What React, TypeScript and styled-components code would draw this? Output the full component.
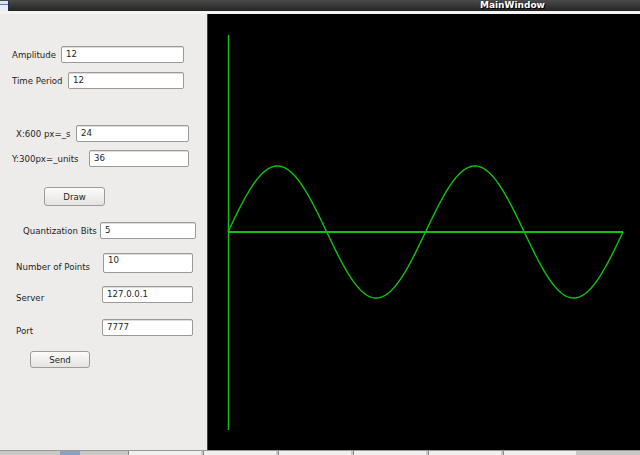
import React from 'react';
import styled, { createGlobalStyle } from 'styled-components';

const Global = createGlobalStyle`
	html, body { margin: 0; padding: 0; background: #edecea; }
	body { font-family: "DejaVu Sans", "Liberation Sans", sans-serif; }
`;

type Field = {
	label: string;
	value: string;
	top: number;
	left: number;
	labelWidth: number;
	width: number;
	height?: number;
	labelDrop?: number;
	valueTop?: boolean;
};

const topFields: Field[] = [
	{ label: 'Amplitude', value: '12', top: 32, left: 12, labelWidth: 49, width: 123 },
	{ label: 'Time Period', value: '12', top: 9, left: 12, labelWidth: 56, width: 116 },
];

const scaleFields: Field[] = [
	{ label: 'X:600 px=_s', value: '24', top: 36, left: 16, labelWidth: 60, width: 113 },
	{ label: 'Y:300px=_units', value: '36', top: 8, left: 12, labelWidth: 77, width: 100 },
];

const netFields: Field[] = [
	{ label: 'Quantization Bits', value: '5', top: 16, left: 23, labelWidth: 77, width: 96 },
	{ label: 'Number of Points', value: '10', top: 14, left: 16, labelWidth: 87, width: 90, height: 20, labelDrop: 8, valueTop: true },
	{ label: 'Server', value: '127.0.0.1', top: 13, left: 16, labelWidth: 86, width: 91, labelDrop: 6 },
	{ label: 'Port', value: '7777', top: 16, left: 16, labelWidth: 86, width: 91, labelDrop: 6 },
];

function wavePath(): string {
	const pts: string[] = [];
	for (let x = 20; x <= 415; x += 1) {
		const y = 218 - 66 * Math.sin((2 * Math.PI * (x - 20)) / 197.5);
		pts.push(`${x},${y.toFixed(2)}`);
	}
	return 'M' + pts.join(' L');
}

function Row({ f }: { f: Field }) {
	return (
		<FieldRow $top={f.top} $left={f.left}>
			<Label $w={f.labelWidth} $drop={f.labelDrop || 0}>{f.label}</Label>
			<Input $w={f.width} $h={f.height || 17} $valueTop={!!f.valueTop}>{f.value}</Input>
		</FieldRow>
	);
}

export default function App(): React.ReactElement {
	return (
		<Screen>
			<Global />
			<TitleBar>
				<WinIcon />
				<Title>MainWindow</Title>
			</TitleBar>
			<Body>
				<Panel>
					{topFields.map((f) => <Row key={f.label} f={f} />)}
					{scaleFields.map((f) => <Row key={f.label} f={f} />)}
					<Button $top={20} $left={44} $w={61} $h={19}>Draw</Button>
					{netFields.map((f) => <Row key={f.label} f={f} />)}
					<Button $top={15} $left={30} $w={60} $h={17}>Send</Button>
				</Panel>
				<Canvas>
					<svg width="433" height="437" viewBox="0 0 433 437">
						<line x1="20.5" y1="21" x2="20.5" y2="416" stroke="#10c010" strokeWidth="1.5" />
						<line x1="20" y1="218" x2="415" y2="218" stroke="#10c010" strokeWidth="2" />
						<path d={wavePath()} fill="none" stroke="#10c010" strokeWidth="1.4" />
					</svg>
				</Canvas>
			</Body>
			<TaskBar>
				<TaskIcons />
				<TaskTab $w={72} />
				<TaskTab $w={72} />
				<TaskTab $w={72} />
				<TaskTab $w={72} />
				<TaskTab $w={72} />
				<TaskTab $w={72} />
			</TaskBar>
		</Screen>
	);
}

const Screen = styled.div`
	width: 640px;
	height: 455px;
	display: flex;
	flex-direction: column;
	overflow: hidden;
	background: #edecea;
`;

const TitleBar = styled.div`
	height: 11px;
	background: linear-gradient(#4a4a4a, #383838 50%, #242424);
	display: flex;
	align-items: center;
	border-bottom: 3px solid #f4f4f2;
`;

const WinIcon = styled.div`
	width: 8px;
	height: 10px;
	background: linear-gradient(#d8e4f4 0 30%, #5a7fc0 30% 45%, #e8eef8 45%);
	border-right: 1px solid #203050;
`;

const Title = styled.div`
	margin-left: 471px;
	color: #ffffff;
	font-family: "DejaVu Sans", sans-serif;
	font-weight: bold;
	font-size: 9px;
	line-height: 11px;
	text-shadow: 1px 1px 0 #000, -1px 0 0 #333;
`;

const Body = styled.div`
	flex: 1;
	display: flex;
	min-height: 0;
`;

const Panel = styled.div`
	width: 207px;
	display: flex;
	flex-direction: column;
	background: #edecea;
	color: #222;
`;

const FieldRow = styled.div<{ $top: number; $left: number }>`
	display: flex;
	align-items: center;
	margin-top: ${(p) => p.$top}px;
	padding-left: ${(p) => p.$left}px;
`;

const Label = styled.div<{ $w: number; $drop: number }>`
	width: ${(p) => p.$w}px;
	white-space: nowrap;
	font-size: 8.6px;
	color: #1e1e1e;
	padding-top: ${(p) => p.$drop}px;
`;

const Input = styled.div<{ $w: number; $h: number; $valueTop: boolean }>`
	box-sizing: border-box;
	width: ${(p) => p.$w}px;
	height: ${(p) => p.$h}px;
	background: #ffffff;
	border: 1px solid #9a9a98;
	border-radius: 2px;
	padding-left: 4px;
	font-size: 8.6px;
	line-height: ${(p) => (p.$valueTop ? 13 : p.$h - 2)}px;
	color: #1e1e1e;
	box-shadow: inset 0 1px 0 #dcdcdc;
`;

const Button = styled.div<{ $top: number; $left: number; $w: number; $h: number }>`
	box-sizing: border-box;
	margin-top: ${(p) => p.$top}px;
	margin-left: ${(p) => p.$left}px;
	width: ${(p) => p.$w}px;
	height: ${(p) => p.$h}px;
	border: 1px solid #9c9c9a;
	border-radius: 3px;
	background: linear-gradient(#fbfbfa, #e4e3e0);
	display: flex;
	align-items: center;
	justify-content: center;
	font-size: 8.6px;
	color: #1e1e1e;
`;

const Canvas = styled.div`
	flex: 1;
	background: #000;
	border-left: 1px solid #444;
	overflow: hidden;
	svg { display: block; }
`;

const TaskBar = styled.div`
	height: 4px;
	display: flex;
	gap: 2px;
	background: #c8c8c6;
	border-top: 1px solid #9a9a9a;
`;

const TaskIcons = styled.div`
	width: 126px;
	background: linear-gradient(90deg, #c8c8c6 0 60px, #8aa0c0 60px 80px, #c8c8c6 80px);
`;

const TaskTab = styled.div<{ $w: number }>`
	width: ${(p) => p.$w}px;
	background: #f0f0ee;
	border-left: 1px solid #888;
`;
